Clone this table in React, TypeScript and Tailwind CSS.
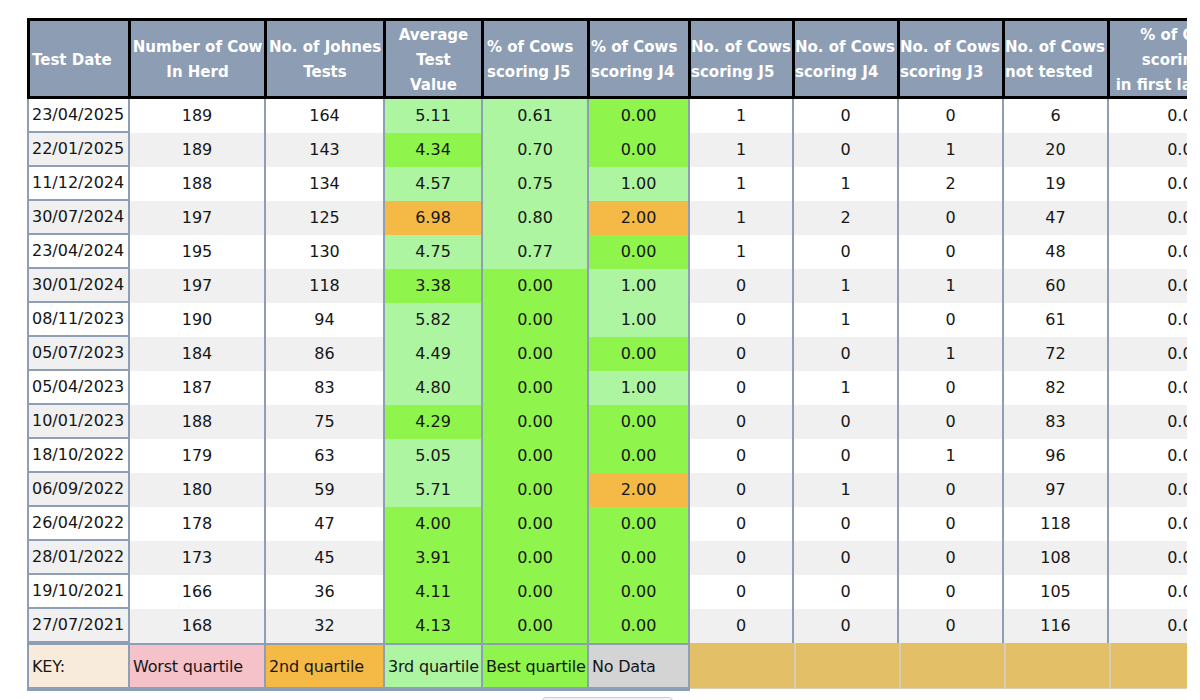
import React from 'react';

type Tone = 'L' | 'B' | 'O' | '';

type Row = {
  date: string;
  herd: number;
  tests: number;
  avg: [string, Tone];
  pj5: [string, Tone];
  pj4: [string, Tone];
  nj5: number;
  nj4: number;
  nj3: number;
  notTested: number;
};

const rows: Row[] = [
  { date: '23/04/2025', herd: 189, tests: 164, avg: ['5.11', 'L'], pj5: ['0.61', 'L'], pj4: ['0.00', 'B'], nj5: 1, nj4: 0, nj3: 0, notTested: 6 },
  { date: '22/01/2025', herd: 189, tests: 143, avg: ['4.34', 'B'], pj5: ['0.70', 'L'], pj4: ['0.00', 'B'], nj5: 1, nj4: 0, nj3: 1, notTested: 20 },
  { date: '11/12/2024', herd: 188, tests: 134, avg: ['4.57', 'L'], pj5: ['0.75', 'L'], pj4: ['1.00', 'L'], nj5: 1, nj4: 1, nj3: 2, notTested: 19 },
  { date: '30/07/2024', herd: 197, tests: 125, avg: ['6.98', 'O'], pj5: ['0.80', 'L'], pj4: ['2.00', 'O'], nj5: 1, nj4: 2, nj3: 0, notTested: 47 },
  { date: '23/04/2024', herd: 195, tests: 130, avg: ['4.75', 'L'], pj5: ['0.77', 'L'], pj4: ['0.00', 'B'], nj5: 1, nj4: 0, nj3: 0, notTested: 48 },
  { date: '30/01/2024', herd: 197, tests: 118, avg: ['3.38', 'B'], pj5: ['0.00', 'B'], pj4: ['1.00', 'L'], nj5: 0, nj4: 1, nj3: 1, notTested: 60 },
  { date: '08/11/2023', herd: 190, tests: 94, avg: ['5.82', 'L'], pj5: ['0.00', 'B'], pj4: ['1.00', 'L'], nj5: 0, nj4: 1, nj3: 0, notTested: 61 },
  { date: '05/07/2023', herd: 184, tests: 86, avg: ['4.49', 'L'], pj5: ['0.00', 'B'], pj4: ['0.00', 'B'], nj5: 0, nj4: 0, nj3: 1, notTested: 72 },
  { date: '05/04/2023', herd: 187, tests: 83, avg: ['4.80', 'L'], pj5: ['0.00', 'B'], pj4: ['1.00', 'L'], nj5: 0, nj4: 1, nj3: 0, notTested: 82 },
  { date: '10/01/2023', herd: 188, tests: 75, avg: ['4.29', 'B'], pj5: ['0.00', 'B'], pj4: ['0.00', 'B'], nj5: 0, nj4: 0, nj3: 0, notTested: 83 },
  { date: '18/10/2022', herd: 179, tests: 63, avg: ['5.05', 'L'], pj5: ['0.00', 'B'], pj4: ['0.00', 'B'], nj5: 0, nj4: 0, nj3: 1, notTested: 96 },
  { date: '06/09/2022', herd: 180, tests: 59, avg: ['5.71', 'L'], pj5: ['0.00', 'B'], pj4: ['2.00', 'O'], nj5: 0, nj4: 1, nj3: 0, notTested: 97 },
  { date: '26/04/2022', herd: 178, tests: 47, avg: ['4.00', 'B'], pj5: ['0.00', 'B'], pj4: ['0.00', 'B'], nj5: 0, nj4: 0, nj3: 0, notTested: 118 },
  { date: '28/01/2022', herd: 173, tests: 45, avg: ['3.91', 'B'], pj5: ['0.00', 'B'], pj4: ['0.00', 'B'], nj5: 0, nj4: 0, nj3: 0, notTested: 108 },
  { date: '19/10/2021', herd: 166, tests: 36, avg: ['4.11', 'B'], pj5: ['0.00', 'B'], pj4: ['0.00', 'B'], nj5: 0, nj4: 0, nj3: 0, notTested: 105 },
  { date: '27/07/2021', herd: 168, tests: 32, avg: ['4.13', 'B'], pj5: ['0.00', 'B'], pj4: ['0.00', 'B'], nj5: 0, nj4: 0, nj3: 0, notTested: 116 },
];

// column widths, left to right
const W = [
  'w-[101px]',
  'w-[136px]',
  'w-[119px]',
  'w-[98px]',
  'w-[106px]',
  'w-[101px]',
  'w-[104px]',
  'w-[105px]',
  'w-[105px]',
  'w-[105px]',
  'w-[150px]',
];

const toneBg: Record<Tone, string> = {
  L: 'bg-[#aef5a1]',
  B: 'bg-[#8ff54c]',
  O: 'bg-[#f5b946]',
  '': '',
};

const headers: { lines: string[]; align: string }[] = [
  { lines: ['Test Date'], align: 'justify-start pl-[2px] text-left' },
  { lines: ['Number of Cow', 'In Herd'], align: 'justify-center text-center' },
  { lines: ['No. of Johnes', 'Tests'], align: 'justify-center text-center' },
  { lines: ['Average', 'Test', 'Value'], align: 'justify-center text-center' },
  { lines: ['% of Cows', 'scoring J5'], align: 'justify-start pl-[3px] text-left' },
  { lines: ['% of Cows', 'scoring J4'], align: 'justify-start pl-[1px] text-left' },
  { lines: ['No. of Cows', 'scoring J5'], align: 'justify-start text-left' },
  { lines: ['No. of Cows', 'scoring J4'], align: 'justify-start text-left' },
  { lines: ['No. of Cows', 'scoring J3'], align: 'justify-start text-left' },
  { lines: ['No. of Cows', 'not tested'], align: 'justify-start text-left' },
  { lines: ['% of Cows', 'scoring J5', 'in first lactation'], align: 'justify-center text-center' },
];

const keyItems: [string, string][] = [
  ['KEY:', 'bg-[#f8ebdb]'],
  ['Worst quartile', 'bg-[#f5c2ca]'],
  ['2nd quartile', 'bg-[#f5b946]'],
  ['3rd quartile', 'bg-[#aef5a1]'],
  ['Best quartile', 'bg-[#8ff54c]'],
  ['No Data', 'bg-[#d4d4d4]'],
];

function Cell({ w, bg, children, first }: { w: string; bg: string; children: React.ReactNode; first?: boolean }) {
  return (
    <div
      className={`${w} ${bg} flex h-full shrink-0 items-center border-l-2 border-[#8e9fb5] ${
        first ? 'justify-start border-b-2 pl-[3px]' : 'justify-center'
      }`}
    >
      {children}
    </div>
  );
}

export default function App() {
  return (
    <div
      className="h-[700px] w-[1200px] overflow-hidden bg-white text-[16px] text-[#161616]"
      style={{ fontFamily: '"DejaVu Sans", Verdana, sans-serif' }}
    >
      <div className="ml-[27px] mt-[18px] w-[1160px] overflow-hidden">
        <div className="w-[1230px]">
          {/* header */}
          <div className="flex h-[81px] border-y-[3px] border-black bg-[#8c9db4]">
            {headers.map((h, i) => (
              <div
                key={i}
                className={`${W[i]} flex shrink-0 items-center overflow-visible whitespace-nowrap border-l-[3px] border-black pt-[3px] text-[15px] font-bold leading-[25px] text-white ${h.align}`}
              >
                <div>
                  {h.lines.map((l, j) => (
                    <div key={j}>{l}</div>
                  ))}
                </div>
              </div>
            ))}
          </div>

          {/* body */}
          {rows.map((r, i) => {
            const rowBg = i % 2 === 0 ? 'bg-white' : 'bg-[#f0f0f0]';
            return (
              <div key={r.date} className={`flex h-[34px] ${rowBg}`}>
                <Cell w={W[0]} bg="" first>
                  {r.date}
                </Cell>
                <Cell w={W[1]} bg="">{r.herd}</Cell>
                <Cell w={W[2]} bg="">{r.tests}</Cell>
                <Cell w={W[3]} bg={toneBg[r.avg[1]]}>{r.avg[0]}</Cell>
                <Cell w={W[4]} bg={toneBg[r.pj5[1]]}>{r.pj5[0]}</Cell>
                <Cell w={W[5]} bg={toneBg[r.pj4[1]]}>{r.pj4[0]}</Cell>
                <Cell w={W[6]} bg="">{r.nj5}</Cell>
                <Cell w={W[7]} bg="">{r.nj4}</Cell>
                <Cell w={W[8]} bg="">{r.nj3}</Cell>
                <Cell w={W[9]} bg="">{r.notTested}</Cell>
                <Cell w={W[10]} bg="">
                  <span className="pl-[4px]">0.00</span>
                </Cell>
              </div>
            );
          })}

          {/* key */}
          <div className="flex items-start">
            <div className="flex h-[48px] border-x-2 border-t-2 border-b-[4px] border-[#8e9fb5] bg-[#8e9fb5]">
              {keyItems.map(([label, bg], i) => (
                <div
                  key={label}
                  className={`${i === 0 ? 'w-[99px]' : W[i]} ${bg} flex shrink-0 items-center whitespace-nowrap pl-[3px] pt-[2px] tracking-[-0.2px] ${
                    i === 0 ? '' : 'border-l-2 border-[#8e9fb5]'
                  }`}
                >
                  {label}
                </div>
              ))}
            </div>
            <div className="flex h-[46px] border-b border-[#d8cfb4] bg-[#e3c067]">
              {[6, 7, 8, 9, 10].map((i) => (
                <div
                  key={i}
                  className={`${W[i]} h-full shrink-0 ${i === 6 ? 'w-[102px]' : 'border-l-2 border-[#d6cdb2]'}`}
                />
              ))}
            </div>
          </div>

          <div className="ml-[515px] mt-[6px] h-[12px] w-[131px] rounded-sm border border-[#cdcdcd] bg-[#f3f3f3]" />
        </div>
      </div>
    </div>
  );
}
